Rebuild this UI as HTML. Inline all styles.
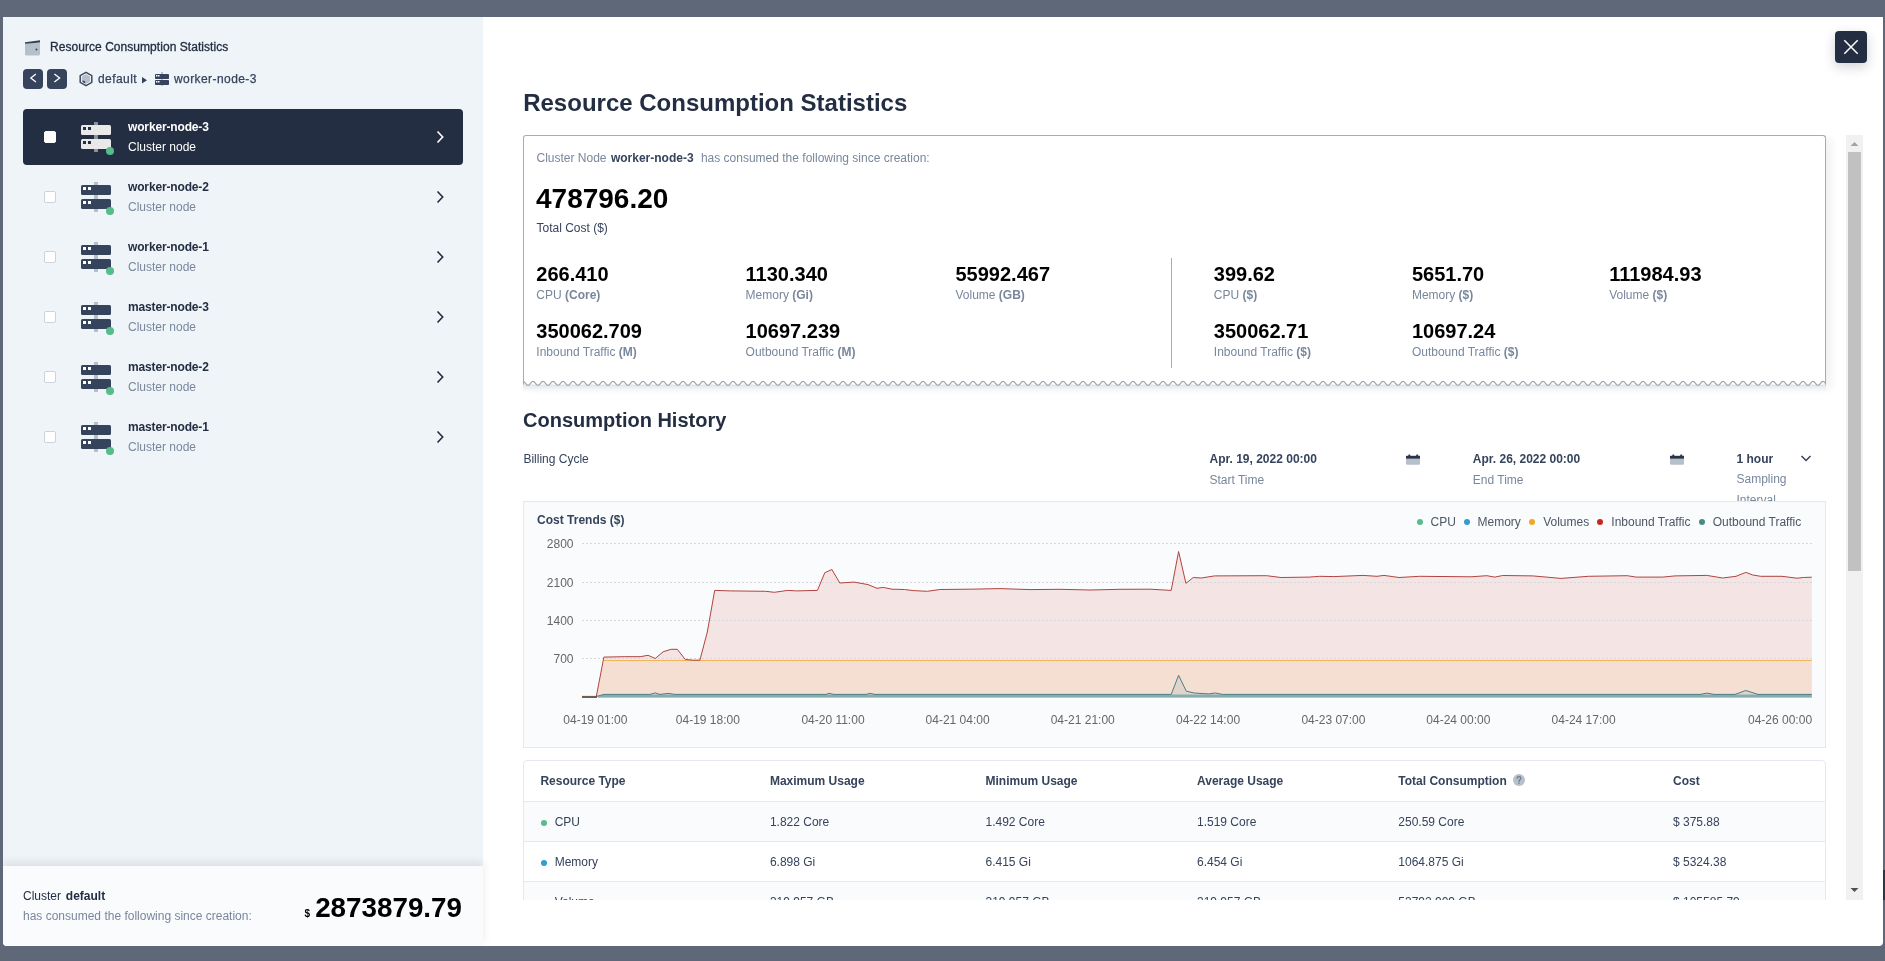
<!DOCTYPE html>
<html><head><meta charset="utf-8">
<style>
*{box-sizing:border-box;margin:0;padding:0}
html,body{width:1885px;height:961px;overflow:hidden}
body{background:#5f6878;font-family:"Liberation Sans",sans-serif;color:#242e42;position:relative}
.abs{position:absolute}
#modal{will-change:transform;position:absolute;left:3px;top:17px;width:1880px;height:929px;background:#fff;border-radius:0 0 4px 4px;overflow:hidden}
#left{position:absolute;left:0;top:0;width:480px;height:929px;background:#eff4f8}
#foot{position:absolute;left:0;top:849px;width:480px;height:80px;background:#f9fbfd;box-shadow:0 -4px 8px rgba(36,46,66,0.10)}
.t12{font-size:12px;line-height:16px;white-space:nowrap}
.b{font-weight:bold}
.gray{color:#79879c}

.item{position:absolute;left:20px;width:440px;height:56px;border-radius:4px}
.item.sel{background:#242e42;color:#fff}
.item .cb{position:absolute;left:21px;top:22px;width:12px;height:12px;background:#fff;border:1px solid #ccd3db;border-radius:2px}
.item.sel .cb{border-color:#fff}
.item .srv{position:absolute;left:58px;top:13px}
.item .nm{position:absolute;left:105px;top:10px;font-size:12px;line-height:16px;font-weight:bold;letter-spacing:-0.15px}
.item .sub{position:absolute;left:105px;top:30px;font-size:12px;line-height:16px;color:#79879c}
.item.sel .sub{color:#fff}
.item .chev{position:absolute;left:412px;top:21px}
.nav{position:absolute;width:20px;height:20px;background:#36435c;border-radius:4px}
.nav svg{display:block}
.nw{white-space:nowrap}
</style></head>
<body>
<div id="rstrip" class="abs" style="left:1883px;top:870px;width:2px;height:30px;background:#2b3548"></div>
<div id="modal">
  <!--MAIN--><div class="abs nw b" style="left:520.2px;top:71.6px;font-size:24px;line-height:28px;color:#242e42">Resource Consumption Statistics</div>
<div class="abs" style="left:1832px;top:14px;width:32px;height:32px;background:#242e42;border-radius:4px;box-shadow:0 4px 12px rgba(36,46,66,0.22)"><svg width="32" height="32" viewBox="0 0 32 32" style="display:block"><path d="M9.3 9.3 L22.7 22.7 M22.7 9.3 L9.3 22.7" stroke="#fff" stroke-width="1.5"/></svg></div>
<div class="abs" style="left:1843px;top:118px;width:17px;height:765px;background:#f1f1f1"></div>
<div class="abs" style="left:1845px;top:135px;width:13px;height:419px;background:#c1c1c1"></div>
<svg class="abs" style="left:1847px;top:124px" width="9" height="6" viewBox="0 0 9 6"><path d="M0.5 5 L4.5 1 L8.5 5Z" fill="#a3a3a3"/></svg>
<svg class="abs" style="left:1847px;top:870px" width="9" height="6" viewBox="0 0 9 6"><path d="M0.5 1 L4.5 5 L8.5 1Z" fill="#505050"/></svg>
<div class="abs" style="left:0;top:118px;width:1843px;height:765px;overflow:hidden"><div class="abs" style="left:0;top:-118px;width:1880px;height:929px"><div class="abs" style="left:520px;top:118px;width:1303px;height:250px;border:1px solid #a6acb4;border-bottom:none;border-radius:3px 3px 0 0;box-shadow:5px 3px 8px rgba(36,46,66,0.07)"></div>
<svg class="abs" style="left:520px;top:363px" width="1303" height="14" viewBox="0 0 1303 14"><defs><linearGradient id="sh" x1="0" y1="0" x2="0" y2="1"><stop offset="0" stop-color="#dde2e8"/><stop offset="1" stop-color="#ffffff" stop-opacity="0"/></linearGradient></defs><rect x="0" y="4.5" width="1303" height="10" fill="url(#sh)"/><path d="M1 0 L1 1.3  C2.2 1.3 2.8 5.3 5.0 5.3 C7.2 5.3 7.8 1.3 10.0 1.3 C12.2 1.3 12.8 5.3 15.0 5.3 C17.2 5.3 17.8 1.3 20.0 1.3 C22.2 1.3 22.8 5.3 25.0 5.3 C27.2 5.3 27.8 1.3 30.0 1.3 C32.2 1.3 32.8 5.3 35.0 5.3 C37.2 5.3 37.8 1.3 40.0 1.3 C42.2 1.3 42.8 5.3 45.0 5.3 C47.2 5.3 47.8 1.3 50.0 1.3 C52.2 1.3 52.8 5.3 55.0 5.3 C57.2 5.3 57.8 1.3 60.0 1.3 C62.2 1.3 62.8 5.3 65.0 5.3 C67.2 5.3 67.8 1.3 70.0 1.3 C72.2 1.3 72.8 5.3 75.0 5.3 C77.2 5.3 77.8 1.3 80.0 1.3 C82.2 1.3 82.8 5.3 85.0 5.3 C87.2 5.3 87.8 1.3 90.0 1.3 C92.2 1.3 92.8 5.3 95.0 5.3 C97.2 5.3 97.8 1.3 100.0 1.3 C102.2 1.3 102.8 5.3 105.0 5.3 C107.2 5.3 107.8 1.3 110.0 1.3 C112.2 1.3 112.8 5.3 115.0 5.3 C117.2 5.3 117.8 1.3 120.0 1.3 C122.2 1.3 122.8 5.3 125.0 5.3 C127.2 5.3 127.8 1.3 130.0 1.3 C132.2 1.3 132.8 5.3 135.0 5.3 C137.2 5.3 137.8 1.3 140.0 1.3 C142.2 1.3 142.8 5.3 145.0 5.3 C147.2 5.3 147.8 1.3 150.0 1.3 C152.2 1.3 152.8 5.3 155.0 5.3 C157.2 5.3 157.8 1.3 160.0 1.3 C162.2 1.3 162.8 5.3 165.0 5.3 C167.2 5.3 167.8 1.3 170.0 1.3 C172.2 1.3 172.8 5.3 175.0 5.3 C177.2 5.3 177.8 1.3 180.0 1.3 C182.2 1.3 182.8 5.3 185.0 5.3 C187.2 5.3 187.8 1.3 190.0 1.3 C192.2 1.3 192.8 5.3 195.0 5.3 C197.2 5.3 197.8 1.3 200.0 1.3 C202.2 1.3 202.8 5.3 205.0 5.3 C207.2 5.3 207.8 1.3 210.0 1.3 C212.2 1.3 212.8 5.3 215.0 5.3 C217.2 5.3 217.8 1.3 220.0 1.3 C222.2 1.3 222.8 5.3 225.0 5.3 C227.2 5.3 227.8 1.3 230.0 1.3 C232.2 1.3 232.8 5.3 235.0 5.3 C237.2 5.3 237.8 1.3 240.0 1.3 C242.2 1.3 242.8 5.3 245.0 5.3 C247.2 5.3 247.8 1.3 250.0 1.3 C252.2 1.3 252.8 5.3 255.0 5.3 C257.2 5.3 257.8 1.3 260.0 1.3 C262.2 1.3 262.8 5.3 265.0 5.3 C267.2 5.3 267.8 1.3 270.0 1.3 C272.2 1.3 272.8 5.3 275.0 5.3 C277.2 5.3 277.8 1.3 280.0 1.3 C282.2 1.3 282.8 5.3 285.0 5.3 C287.2 5.3 287.8 1.3 290.0 1.3 C292.2 1.3 292.8 5.3 295.0 5.3 C297.2 5.3 297.8 1.3 300.0 1.3 C302.2 1.3 302.8 5.3 305.0 5.3 C307.2 5.3 307.8 1.3 310.0 1.3 C312.2 1.3 312.8 5.3 315.0 5.3 C317.2 5.3 317.8 1.3 320.0 1.3 C322.2 1.3 322.8 5.3 325.0 5.3 C327.2 5.3 327.8 1.3 330.0 1.3 C332.2 1.3 332.8 5.3 335.0 5.3 C337.2 5.3 337.8 1.3 340.0 1.3 C342.2 1.3 342.8 5.3 345.0 5.3 C347.2 5.3 347.8 1.3 350.0 1.3 C352.2 1.3 352.8 5.3 355.0 5.3 C357.2 5.3 357.8 1.3 360.0 1.3 C362.2 1.3 362.8 5.3 365.0 5.3 C367.2 5.3 367.8 1.3 370.0 1.3 C372.2 1.3 372.8 5.3 375.0 5.3 C377.2 5.3 377.8 1.3 380.0 1.3 C382.2 1.3 382.8 5.3 385.0 5.3 C387.2 5.3 387.8 1.3 390.0 1.3 C392.2 1.3 392.8 5.3 395.0 5.3 C397.2 5.3 397.8 1.3 400.0 1.3 C402.2 1.3 402.8 5.3 405.0 5.3 C407.2 5.3 407.8 1.3 410.0 1.3 C412.2 1.3 412.8 5.3 415.0 5.3 C417.2 5.3 417.8 1.3 420.0 1.3 C422.2 1.3 422.8 5.3 425.0 5.3 C427.2 5.3 427.8 1.3 430.0 1.3 C432.2 1.3 432.8 5.3 435.0 5.3 C437.2 5.3 437.8 1.3 440.0 1.3 C442.2 1.3 442.8 5.3 445.0 5.3 C447.2 5.3 447.8 1.3 450.0 1.3 C452.2 1.3 452.8 5.3 455.0 5.3 C457.2 5.3 457.8 1.3 460.0 1.3 C462.2 1.3 462.8 5.3 465.0 5.3 C467.2 5.3 467.8 1.3 470.0 1.3 C472.2 1.3 472.8 5.3 475.0 5.3 C477.2 5.3 477.8 1.3 480.0 1.3 C482.2 1.3 482.8 5.3 485.0 5.3 C487.2 5.3 487.8 1.3 490.0 1.3 C492.2 1.3 492.8 5.3 495.0 5.3 C497.2 5.3 497.8 1.3 500.0 1.3 C502.2 1.3 502.8 5.3 505.0 5.3 C507.2 5.3 507.8 1.3 510.0 1.3 C512.2 1.3 512.8 5.3 515.0 5.3 C517.2 5.3 517.8 1.3 520.0 1.3 C522.2 1.3 522.8 5.3 525.0 5.3 C527.2 5.3 527.8 1.3 530.0 1.3 C532.2 1.3 532.8 5.3 535.0 5.3 C537.2 5.3 537.8 1.3 540.0 1.3 C542.2 1.3 542.8 5.3 545.0 5.3 C547.2 5.3 547.8 1.3 550.0 1.3 C552.2 1.3 552.8 5.3 555.0 5.3 C557.2 5.3 557.8 1.3 560.0 1.3 C562.2 1.3 562.8 5.3 565.0 5.3 C567.2 5.3 567.8 1.3 570.0 1.3 C572.2 1.3 572.8 5.3 575.0 5.3 C577.2 5.3 577.8 1.3 580.0 1.3 C582.2 1.3 582.8 5.3 585.0 5.3 C587.2 5.3 587.8 1.3 590.0 1.3 C592.2 1.3 592.8 5.3 595.0 5.3 C597.2 5.3 597.8 1.3 600.0 1.3 C602.2 1.3 602.8 5.3 605.0 5.3 C607.2 5.3 607.8 1.3 610.0 1.3 C612.2 1.3 612.8 5.3 615.0 5.3 C617.2 5.3 617.8 1.3 620.0 1.3 C622.2 1.3 622.8 5.3 625.0 5.3 C627.2 5.3 627.8 1.3 630.0 1.3 C632.2 1.3 632.8 5.3 635.0 5.3 C637.2 5.3 637.8 1.3 640.0 1.3 C642.2 1.3 642.8 5.3 645.0 5.3 C647.2 5.3 647.8 1.3 650.0 1.3 C652.2 1.3 652.8 5.3 655.0 5.3 C657.2 5.3 657.8 1.3 660.0 1.3 C662.2 1.3 662.8 5.3 665.0 5.3 C667.2 5.3 667.8 1.3 670.0 1.3 C672.2 1.3 672.8 5.3 675.0 5.3 C677.2 5.3 677.8 1.3 680.0 1.3 C682.2 1.3 682.8 5.3 685.0 5.3 C687.2 5.3 687.8 1.3 690.0 1.3 C692.2 1.3 692.8 5.3 695.0 5.3 C697.2 5.3 697.8 1.3 700.0 1.3 C702.2 1.3 702.8 5.3 705.0 5.3 C707.2 5.3 707.8 1.3 710.0 1.3 C712.2 1.3 712.8 5.3 715.0 5.3 C717.2 5.3 717.8 1.3 720.0 1.3 C722.2 1.3 722.8 5.3 725.0 5.3 C727.2 5.3 727.8 1.3 730.0 1.3 C732.2 1.3 732.8 5.3 735.0 5.3 C737.2 5.3 737.8 1.3 740.0 1.3 C742.2 1.3 742.8 5.3 745.0 5.3 C747.2 5.3 747.8 1.3 750.0 1.3 C752.2 1.3 752.8 5.3 755.0 5.3 C757.2 5.3 757.8 1.3 760.0 1.3 C762.2 1.3 762.8 5.3 765.0 5.3 C767.2 5.3 767.8 1.3 770.0 1.3 C772.2 1.3 772.8 5.3 775.0 5.3 C777.2 5.3 777.8 1.3 780.0 1.3 C782.2 1.3 782.8 5.3 785.0 5.3 C787.2 5.3 787.8 1.3 790.0 1.3 C792.2 1.3 792.8 5.3 795.0 5.3 C797.2 5.3 797.8 1.3 800.0 1.3 C802.2 1.3 802.8 5.3 805.0 5.3 C807.2 5.3 807.8 1.3 810.0 1.3 C812.2 1.3 812.8 5.3 815.0 5.3 C817.2 5.3 817.8 1.3 820.0 1.3 C822.2 1.3 822.8 5.3 825.0 5.3 C827.2 5.3 827.8 1.3 830.0 1.3 C832.2 1.3 832.8 5.3 835.0 5.3 C837.2 5.3 837.8 1.3 840.0 1.3 C842.2 1.3 842.8 5.3 845.0 5.3 C847.2 5.3 847.8 1.3 850.0 1.3 C852.2 1.3 852.8 5.3 855.0 5.3 C857.2 5.3 857.8 1.3 860.0 1.3 C862.2 1.3 862.8 5.3 865.0 5.3 C867.2 5.3 867.8 1.3 870.0 1.3 C872.2 1.3 872.8 5.3 875.0 5.3 C877.2 5.3 877.8 1.3 880.0 1.3 C882.2 1.3 882.8 5.3 885.0 5.3 C887.2 5.3 887.8 1.3 890.0 1.3 C892.2 1.3 892.8 5.3 895.0 5.3 C897.2 5.3 897.8 1.3 900.0 1.3 C902.2 1.3 902.8 5.3 905.0 5.3 C907.2 5.3 907.8 1.3 910.0 1.3 C912.2 1.3 912.8 5.3 915.0 5.3 C917.2 5.3 917.8 1.3 920.0 1.3 C922.2 1.3 922.8 5.3 925.0 5.3 C927.2 5.3 927.8 1.3 930.0 1.3 C932.2 1.3 932.8 5.3 935.0 5.3 C937.2 5.3 937.8 1.3 940.0 1.3 C942.2 1.3 942.8 5.3 945.0 5.3 C947.2 5.3 947.8 1.3 950.0 1.3 C952.2 1.3 952.8 5.3 955.0 5.3 C957.2 5.3 957.8 1.3 960.0 1.3 C962.2 1.3 962.8 5.3 965.0 5.3 C967.2 5.3 967.8 1.3 970.0 1.3 C972.2 1.3 972.8 5.3 975.0 5.3 C977.2 5.3 977.8 1.3 980.0 1.3 C982.2 1.3 982.8 5.3 985.0 5.3 C987.2 5.3 987.8 1.3 990.0 1.3 C992.2 1.3 992.8 5.3 995.0 5.3 C997.2 5.3 997.8 1.3 1000.0 1.3 C1002.2 1.3 1002.8 5.3 1005.0 5.3 C1007.2 5.3 1007.8 1.3 1010.0 1.3 C1012.2 1.3 1012.8 5.3 1015.0 5.3 C1017.2 5.3 1017.8 1.3 1020.0 1.3 C1022.2 1.3 1022.8 5.3 1025.0 5.3 C1027.2 5.3 1027.8 1.3 1030.0 1.3 C1032.2 1.3 1032.8 5.3 1035.0 5.3 C1037.2 5.3 1037.8 1.3 1040.0 1.3 C1042.2 1.3 1042.8 5.3 1045.0 5.3 C1047.2 5.3 1047.8 1.3 1050.0 1.3 C1052.2 1.3 1052.8 5.3 1055.0 5.3 C1057.2 5.3 1057.8 1.3 1060.0 1.3 C1062.2 1.3 1062.8 5.3 1065.0 5.3 C1067.2 5.3 1067.8 1.3 1070.0 1.3 C1072.2 1.3 1072.8 5.3 1075.0 5.3 C1077.2 5.3 1077.8 1.3 1080.0 1.3 C1082.2 1.3 1082.8 5.3 1085.0 5.3 C1087.2 5.3 1087.8 1.3 1090.0 1.3 C1092.2 1.3 1092.8 5.3 1095.0 5.3 C1097.2 5.3 1097.8 1.3 1100.0 1.3 C1102.2 1.3 1102.8 5.3 1105.0 5.3 C1107.2 5.3 1107.8 1.3 1110.0 1.3 C1112.2 1.3 1112.8 5.3 1115.0 5.3 C1117.2 5.3 1117.8 1.3 1120.0 1.3 C1122.2 1.3 1122.8 5.3 1125.0 5.3 C1127.2 5.3 1127.8 1.3 1130.0 1.3 C1132.2 1.3 1132.8 5.3 1135.0 5.3 C1137.2 5.3 1137.8 1.3 1140.0 1.3 C1142.2 1.3 1142.8 5.3 1145.0 5.3 C1147.2 5.3 1147.8 1.3 1150.0 1.3 C1152.2 1.3 1152.8 5.3 1155.0 5.3 C1157.2 5.3 1157.8 1.3 1160.0 1.3 C1162.2 1.3 1162.8 5.3 1165.0 5.3 C1167.2 5.3 1167.8 1.3 1170.0 1.3 C1172.2 1.3 1172.8 5.3 1175.0 5.3 C1177.2 5.3 1177.8 1.3 1180.0 1.3 C1182.2 1.3 1182.8 5.3 1185.0 5.3 C1187.2 5.3 1187.8 1.3 1190.0 1.3 C1192.2 1.3 1192.8 5.3 1195.0 5.3 C1197.2 5.3 1197.8 1.3 1200.0 1.3 C1202.2 1.3 1202.8 5.3 1205.0 5.3 C1207.2 5.3 1207.8 1.3 1210.0 1.3 C1212.2 1.3 1212.8 5.3 1215.0 5.3 C1217.2 5.3 1217.8 1.3 1220.0 1.3 C1222.2 1.3 1222.8 5.3 1225.0 5.3 C1227.2 5.3 1227.8 1.3 1230.0 1.3 C1232.2 1.3 1232.8 5.3 1235.0 5.3 C1237.2 5.3 1237.8 1.3 1240.0 1.3 C1242.2 1.3 1242.8 5.3 1245.0 5.3 C1247.2 5.3 1247.8 1.3 1250.0 1.3 C1252.2 1.3 1252.8 5.3 1255.0 5.3 C1257.2 5.3 1257.8 1.3 1260.0 1.3 C1262.2 1.3 1262.8 5.3 1265.0 5.3 C1267.2 5.3 1267.8 1.3 1270.0 1.3 C1272.2 1.3 1272.8 5.3 1275.0 5.3 C1277.2 5.3 1277.8 1.3 1280.0 1.3 C1282.2 1.3 1282.8 5.3 1285.0 5.3 C1287.2 5.3 1287.8 1.3 1290.0 1.3 C1292.2 1.3 1292.8 5.3 1295.0 5.3 C1297.2 5.3 1297.8 1.3 1300.0 1.3 C1302.2 1.3 1302.8 5.3 1305.0 5.3 C1307.2 5.3 1307.8 1.3 1310.0 1.3 L1302 0 Z" fill="#fff"/><path d="M0 1.3 C2.2 1.3 2.8 5.3 5.0 5.3 C7.2 5.3 7.8 1.3 10.0 1.3 C12.2 1.3 12.8 5.3 15.0 5.3 C17.2 5.3 17.8 1.3 20.0 1.3 C22.2 1.3 22.8 5.3 25.0 5.3 C27.2 5.3 27.8 1.3 30.0 1.3 C32.2 1.3 32.8 5.3 35.0 5.3 C37.2 5.3 37.8 1.3 40.0 1.3 C42.2 1.3 42.8 5.3 45.0 5.3 C47.2 5.3 47.8 1.3 50.0 1.3 C52.2 1.3 52.8 5.3 55.0 5.3 C57.2 5.3 57.8 1.3 60.0 1.3 C62.2 1.3 62.8 5.3 65.0 5.3 C67.2 5.3 67.8 1.3 70.0 1.3 C72.2 1.3 72.8 5.3 75.0 5.3 C77.2 5.3 77.8 1.3 80.0 1.3 C82.2 1.3 82.8 5.3 85.0 5.3 C87.2 5.3 87.8 1.3 90.0 1.3 C92.2 1.3 92.8 5.3 95.0 5.3 C97.2 5.3 97.8 1.3 100.0 1.3 C102.2 1.3 102.8 5.3 105.0 5.3 C107.2 5.3 107.8 1.3 110.0 1.3 C112.2 1.3 112.8 5.3 115.0 5.3 C117.2 5.3 117.8 1.3 120.0 1.3 C122.2 1.3 122.8 5.3 125.0 5.3 C127.2 5.3 127.8 1.3 130.0 1.3 C132.2 1.3 132.8 5.3 135.0 5.3 C137.2 5.3 137.8 1.3 140.0 1.3 C142.2 1.3 142.8 5.3 145.0 5.3 C147.2 5.3 147.8 1.3 150.0 1.3 C152.2 1.3 152.8 5.3 155.0 5.3 C157.2 5.3 157.8 1.3 160.0 1.3 C162.2 1.3 162.8 5.3 165.0 5.3 C167.2 5.3 167.8 1.3 170.0 1.3 C172.2 1.3 172.8 5.3 175.0 5.3 C177.2 5.3 177.8 1.3 180.0 1.3 C182.2 1.3 182.8 5.3 185.0 5.3 C187.2 5.3 187.8 1.3 190.0 1.3 C192.2 1.3 192.8 5.3 195.0 5.3 C197.2 5.3 197.8 1.3 200.0 1.3 C202.2 1.3 202.8 5.3 205.0 5.3 C207.2 5.3 207.8 1.3 210.0 1.3 C212.2 1.3 212.8 5.3 215.0 5.3 C217.2 5.3 217.8 1.3 220.0 1.3 C222.2 1.3 222.8 5.3 225.0 5.3 C227.2 5.3 227.8 1.3 230.0 1.3 C232.2 1.3 232.8 5.3 235.0 5.3 C237.2 5.3 237.8 1.3 240.0 1.3 C242.2 1.3 242.8 5.3 245.0 5.3 C247.2 5.3 247.8 1.3 250.0 1.3 C252.2 1.3 252.8 5.3 255.0 5.3 C257.2 5.3 257.8 1.3 260.0 1.3 C262.2 1.3 262.8 5.3 265.0 5.3 C267.2 5.3 267.8 1.3 270.0 1.3 C272.2 1.3 272.8 5.3 275.0 5.3 C277.2 5.3 277.8 1.3 280.0 1.3 C282.2 1.3 282.8 5.3 285.0 5.3 C287.2 5.3 287.8 1.3 290.0 1.3 C292.2 1.3 292.8 5.3 295.0 5.3 C297.2 5.3 297.8 1.3 300.0 1.3 C302.2 1.3 302.8 5.3 305.0 5.3 C307.2 5.3 307.8 1.3 310.0 1.3 C312.2 1.3 312.8 5.3 315.0 5.3 C317.2 5.3 317.8 1.3 320.0 1.3 C322.2 1.3 322.8 5.3 325.0 5.3 C327.2 5.3 327.8 1.3 330.0 1.3 C332.2 1.3 332.8 5.3 335.0 5.3 C337.2 5.3 337.8 1.3 340.0 1.3 C342.2 1.3 342.8 5.3 345.0 5.3 C347.2 5.3 347.8 1.3 350.0 1.3 C352.2 1.3 352.8 5.3 355.0 5.3 C357.2 5.3 357.8 1.3 360.0 1.3 C362.2 1.3 362.8 5.3 365.0 5.3 C367.2 5.3 367.8 1.3 370.0 1.3 C372.2 1.3 372.8 5.3 375.0 5.3 C377.2 5.3 377.8 1.3 380.0 1.3 C382.2 1.3 382.8 5.3 385.0 5.3 C387.2 5.3 387.8 1.3 390.0 1.3 C392.2 1.3 392.8 5.3 395.0 5.3 C397.2 5.3 397.8 1.3 400.0 1.3 C402.2 1.3 402.8 5.3 405.0 5.3 C407.2 5.3 407.8 1.3 410.0 1.3 C412.2 1.3 412.8 5.3 415.0 5.3 C417.2 5.3 417.8 1.3 420.0 1.3 C422.2 1.3 422.8 5.3 425.0 5.3 C427.2 5.3 427.8 1.3 430.0 1.3 C432.2 1.3 432.8 5.3 435.0 5.3 C437.2 5.3 437.8 1.3 440.0 1.3 C442.2 1.3 442.8 5.3 445.0 5.3 C447.2 5.3 447.8 1.3 450.0 1.3 C452.2 1.3 452.8 5.3 455.0 5.3 C457.2 5.3 457.8 1.3 460.0 1.3 C462.2 1.3 462.8 5.3 465.0 5.3 C467.2 5.3 467.8 1.3 470.0 1.3 C472.2 1.3 472.8 5.3 475.0 5.3 C477.2 5.3 477.8 1.3 480.0 1.3 C482.2 1.3 482.8 5.3 485.0 5.3 C487.2 5.3 487.8 1.3 490.0 1.3 C492.2 1.3 492.8 5.3 495.0 5.3 C497.2 5.3 497.8 1.3 500.0 1.3 C502.2 1.3 502.8 5.3 505.0 5.3 C507.2 5.3 507.8 1.3 510.0 1.3 C512.2 1.3 512.8 5.3 515.0 5.3 C517.2 5.3 517.8 1.3 520.0 1.3 C522.2 1.3 522.8 5.3 525.0 5.3 C527.2 5.3 527.8 1.3 530.0 1.3 C532.2 1.3 532.8 5.3 535.0 5.3 C537.2 5.3 537.8 1.3 540.0 1.3 C542.2 1.3 542.8 5.3 545.0 5.3 C547.2 5.3 547.8 1.3 550.0 1.3 C552.2 1.3 552.8 5.3 555.0 5.3 C557.2 5.3 557.8 1.3 560.0 1.3 C562.2 1.3 562.8 5.3 565.0 5.3 C567.2 5.3 567.8 1.3 570.0 1.3 C572.2 1.3 572.8 5.3 575.0 5.3 C577.2 5.3 577.8 1.3 580.0 1.3 C582.2 1.3 582.8 5.3 585.0 5.3 C587.2 5.3 587.8 1.3 590.0 1.3 C592.2 1.3 592.8 5.3 595.0 5.3 C597.2 5.3 597.8 1.3 600.0 1.3 C602.2 1.3 602.8 5.3 605.0 5.3 C607.2 5.3 607.8 1.3 610.0 1.3 C612.2 1.3 612.8 5.3 615.0 5.3 C617.2 5.3 617.8 1.3 620.0 1.3 C622.2 1.3 622.8 5.3 625.0 5.3 C627.2 5.3 627.8 1.3 630.0 1.3 C632.2 1.3 632.8 5.3 635.0 5.3 C637.2 5.3 637.8 1.3 640.0 1.3 C642.2 1.3 642.8 5.3 645.0 5.3 C647.2 5.3 647.8 1.3 650.0 1.3 C652.2 1.3 652.8 5.3 655.0 5.3 C657.2 5.3 657.8 1.3 660.0 1.3 C662.2 1.3 662.8 5.3 665.0 5.3 C667.2 5.3 667.8 1.3 670.0 1.3 C672.2 1.3 672.8 5.3 675.0 5.3 C677.2 5.3 677.8 1.3 680.0 1.3 C682.2 1.3 682.8 5.3 685.0 5.3 C687.2 5.3 687.8 1.3 690.0 1.3 C692.2 1.3 692.8 5.3 695.0 5.3 C697.2 5.3 697.8 1.3 700.0 1.3 C702.2 1.3 702.8 5.3 705.0 5.3 C707.2 5.3 707.8 1.3 710.0 1.3 C712.2 1.3 712.8 5.3 715.0 5.3 C717.2 5.3 717.8 1.3 720.0 1.3 C722.2 1.3 722.8 5.3 725.0 5.3 C727.2 5.3 727.8 1.3 730.0 1.3 C732.2 1.3 732.8 5.3 735.0 5.3 C737.2 5.3 737.8 1.3 740.0 1.3 C742.2 1.3 742.8 5.3 745.0 5.3 C747.2 5.3 747.8 1.3 750.0 1.3 C752.2 1.3 752.8 5.3 755.0 5.3 C757.2 5.3 757.8 1.3 760.0 1.3 C762.2 1.3 762.8 5.3 765.0 5.3 C767.2 5.3 767.8 1.3 770.0 1.3 C772.2 1.3 772.8 5.3 775.0 5.3 C777.2 5.3 777.8 1.3 780.0 1.3 C782.2 1.3 782.8 5.3 785.0 5.3 C787.2 5.3 787.8 1.3 790.0 1.3 C792.2 1.3 792.8 5.3 795.0 5.3 C797.2 5.3 797.8 1.3 800.0 1.3 C802.2 1.3 802.8 5.3 805.0 5.3 C807.2 5.3 807.8 1.3 810.0 1.3 C812.2 1.3 812.8 5.3 815.0 5.3 C817.2 5.3 817.8 1.3 820.0 1.3 C822.2 1.3 822.8 5.3 825.0 5.3 C827.2 5.3 827.8 1.3 830.0 1.3 C832.2 1.3 832.8 5.3 835.0 5.3 C837.2 5.3 837.8 1.3 840.0 1.3 C842.2 1.3 842.8 5.3 845.0 5.3 C847.2 5.3 847.8 1.3 850.0 1.3 C852.2 1.3 852.8 5.3 855.0 5.3 C857.2 5.3 857.8 1.3 860.0 1.3 C862.2 1.3 862.8 5.3 865.0 5.3 C867.2 5.3 867.8 1.3 870.0 1.3 C872.2 1.3 872.8 5.3 875.0 5.3 C877.2 5.3 877.8 1.3 880.0 1.3 C882.2 1.3 882.8 5.3 885.0 5.3 C887.2 5.3 887.8 1.3 890.0 1.3 C892.2 1.3 892.8 5.3 895.0 5.3 C897.2 5.3 897.8 1.3 900.0 1.3 C902.2 1.3 902.8 5.3 905.0 5.3 C907.2 5.3 907.8 1.3 910.0 1.3 C912.2 1.3 912.8 5.3 915.0 5.3 C917.2 5.3 917.8 1.3 920.0 1.3 C922.2 1.3 922.8 5.3 925.0 5.3 C927.2 5.3 927.8 1.3 930.0 1.3 C932.2 1.3 932.8 5.3 935.0 5.3 C937.2 5.3 937.8 1.3 940.0 1.3 C942.2 1.3 942.8 5.3 945.0 5.3 C947.2 5.3 947.8 1.3 950.0 1.3 C952.2 1.3 952.8 5.3 955.0 5.3 C957.2 5.3 957.8 1.3 960.0 1.3 C962.2 1.3 962.8 5.3 965.0 5.3 C967.2 5.3 967.8 1.3 970.0 1.3 C972.2 1.3 972.8 5.3 975.0 5.3 C977.2 5.3 977.8 1.3 980.0 1.3 C982.2 1.3 982.8 5.3 985.0 5.3 C987.2 5.3 987.8 1.3 990.0 1.3 C992.2 1.3 992.8 5.3 995.0 5.3 C997.2 5.3 997.8 1.3 1000.0 1.3 C1002.2 1.3 1002.8 5.3 1005.0 5.3 C1007.2 5.3 1007.8 1.3 1010.0 1.3 C1012.2 1.3 1012.8 5.3 1015.0 5.3 C1017.2 5.3 1017.8 1.3 1020.0 1.3 C1022.2 1.3 1022.8 5.3 1025.0 5.3 C1027.2 5.3 1027.8 1.3 1030.0 1.3 C1032.2 1.3 1032.8 5.3 1035.0 5.3 C1037.2 5.3 1037.8 1.3 1040.0 1.3 C1042.2 1.3 1042.8 5.3 1045.0 5.3 C1047.2 5.3 1047.8 1.3 1050.0 1.3 C1052.2 1.3 1052.8 5.3 1055.0 5.3 C1057.2 5.3 1057.8 1.3 1060.0 1.3 C1062.2 1.3 1062.8 5.3 1065.0 5.3 C1067.2 5.3 1067.8 1.3 1070.0 1.3 C1072.2 1.3 1072.8 5.3 1075.0 5.3 C1077.2 5.3 1077.8 1.3 1080.0 1.3 C1082.2 1.3 1082.8 5.3 1085.0 5.3 C1087.2 5.3 1087.8 1.3 1090.0 1.3 C1092.2 1.3 1092.8 5.3 1095.0 5.3 C1097.2 5.3 1097.8 1.3 1100.0 1.3 C1102.2 1.3 1102.8 5.3 1105.0 5.3 C1107.2 5.3 1107.8 1.3 1110.0 1.3 C1112.2 1.3 1112.8 5.3 1115.0 5.3 C1117.2 5.3 1117.8 1.3 1120.0 1.3 C1122.2 1.3 1122.8 5.3 1125.0 5.3 C1127.2 5.3 1127.8 1.3 1130.0 1.3 C1132.2 1.3 1132.8 5.3 1135.0 5.3 C1137.2 5.3 1137.8 1.3 1140.0 1.3 C1142.2 1.3 1142.8 5.3 1145.0 5.3 C1147.2 5.3 1147.8 1.3 1150.0 1.3 C1152.2 1.3 1152.8 5.3 1155.0 5.3 C1157.2 5.3 1157.8 1.3 1160.0 1.3 C1162.2 1.3 1162.8 5.3 1165.0 5.3 C1167.2 5.3 1167.8 1.3 1170.0 1.3 C1172.2 1.3 1172.8 5.3 1175.0 5.3 C1177.2 5.3 1177.8 1.3 1180.0 1.3 C1182.2 1.3 1182.8 5.3 1185.0 5.3 C1187.2 5.3 1187.8 1.3 1190.0 1.3 C1192.2 1.3 1192.8 5.3 1195.0 5.3 C1197.2 5.3 1197.8 1.3 1200.0 1.3 C1202.2 1.3 1202.8 5.3 1205.0 5.3 C1207.2 5.3 1207.8 1.3 1210.0 1.3 C1212.2 1.3 1212.8 5.3 1215.0 5.3 C1217.2 5.3 1217.8 1.3 1220.0 1.3 C1222.2 1.3 1222.8 5.3 1225.0 5.3 C1227.2 5.3 1227.8 1.3 1230.0 1.3 C1232.2 1.3 1232.8 5.3 1235.0 5.3 C1237.2 5.3 1237.8 1.3 1240.0 1.3 C1242.2 1.3 1242.8 5.3 1245.0 5.3 C1247.2 5.3 1247.8 1.3 1250.0 1.3 C1252.2 1.3 1252.8 5.3 1255.0 5.3 C1257.2 5.3 1257.8 1.3 1260.0 1.3 C1262.2 1.3 1262.8 5.3 1265.0 5.3 C1267.2 5.3 1267.8 1.3 1270.0 1.3 C1272.2 1.3 1272.8 5.3 1275.0 5.3 C1277.2 5.3 1277.8 1.3 1280.0 1.3 C1282.2 1.3 1282.8 5.3 1285.0 5.3 C1287.2 5.3 1287.8 1.3 1290.0 1.3 C1292.2 1.3 1292.8 5.3 1295.0 5.3 C1297.2 5.3 1297.8 1.3 1300.0 1.3 C1302.2 1.3 1302.8 5.3 1305.0 5.3 C1307.2 5.3 1307.8 1.3 1310.0 1.3" fill="none" stroke="#a3a9b2" stroke-width="1.2"/><path d="M0.5 0 L0.5 1.5 M1302.5 0 L1302.5 3" stroke="#a6acb4" stroke-width="1"/></svg>
<div class="abs nw " style="left:533.5px;top:132.8px;font-size:12px;line-height:16px;"><span class="gray">Cluster Node</span> <span class="b" style="color:#36435c;margin-left:1px">worker-node-3</span> <span class="gray" style="margin-left:4px">has consumed the following since creation:</span></div>
<div class="abs nw b" style="left:533.0px;top:165.7px;font-size:28px;line-height:32px;color:#000">478796.20</div>
<div class="abs nw " style="left:533.5px;top:202.6px;font-size:12px;line-height:16px;color:#36435c">Total Cost ($)</div>
<div class="abs nw b" style="left:533.3px;top:244.9px;font-size:20px;line-height:24px;color:#000">266.410</div><div class="abs nw gray" style="left:533.3px;top:270.0px;font-size:12px;line-height:16px;">CPU <span class="b">(Core)</span></div>
<div class="abs nw b" style="left:742.6px;top:244.9px;font-size:20px;line-height:24px;color:#000">1130.340</div><div class="abs nw gray" style="left:742.6px;top:270.0px;font-size:12px;line-height:16px;">Memory <span class="b">(Gi)</span></div>
<div class="abs nw b" style="left:952.5px;top:244.9px;font-size:20px;line-height:24px;color:#000">55992.467</div><div class="abs nw gray" style="left:952.5px;top:270.0px;font-size:12px;line-height:16px;">Volume <span class="b">(GB)</span></div>
<div class="abs nw b" style="left:533.3px;top:302.2px;font-size:20px;line-height:24px;color:#000">350062.709</div><div class="abs nw gray" style="left:533.3px;top:327.0px;font-size:12px;line-height:16px;">Inbound Traffic <span class="b">(M)</span></div>
<div class="abs nw b" style="left:742.6px;top:302.2px;font-size:20px;line-height:24px;color:#000">10697.239</div><div class="abs nw gray" style="left:742.6px;top:327.0px;font-size:12px;line-height:16px;">Outbound Traffic <span class="b">(M)</span></div>
<div class="abs" style="left:1168px;top:241px;width:1px;height:110px;background:#a4adb9"></div>
<div class="abs nw b" style="left:1210.8px;top:244.9px;font-size:20px;line-height:24px;color:#000">399.62</div><div class="abs nw gray" style="left:1210.8px;top:270.0px;font-size:12px;line-height:16px;">CPU <span class="b">($)</span></div>
<div class="abs nw b" style="left:1408.9px;top:244.9px;font-size:20px;line-height:24px;color:#000">5651.70</div><div class="abs nw gray" style="left:1408.9px;top:270.0px;font-size:12px;line-height:16px;">Memory <span class="b">($)</span></div>
<div class="abs nw b" style="left:1606.2px;top:244.9px;font-size:20px;line-height:24px;color:#000">111984.93</div><div class="abs nw gray" style="left:1606.2px;top:270.0px;font-size:12px;line-height:16px;">Volume <span class="b">($)</span></div>
<div class="abs nw b" style="left:1210.8px;top:302.2px;font-size:20px;line-height:24px;color:#000">350062.71</div><div class="abs nw gray" style="left:1210.8px;top:327.0px;font-size:12px;line-height:16px;">Inbound Traffic <span class="b">($)</span></div>
<div class="abs nw b" style="left:1408.9px;top:302.2px;font-size:20px;line-height:24px;color:#000">10697.24</div><div class="abs nw gray" style="left:1408.9px;top:327.0px;font-size:12px;line-height:16px;">Outbound Traffic <span class="b">($)</span></div>
<div class="abs nw b" style="left:520.0px;top:391.2px;font-size:20px;line-height:24px;color:#242e42">Consumption History</div>
<div class="abs nw " style="left:520.4px;top:433.9px;font-size:12px;line-height:16px;color:#36435c">Billing Cycle</div>
<div class="abs nw b" style="left:1206.5px;top:434.0px;font-size:12px;line-height:16px;color:#36435c">Apr. 19, 2022 00:00</div>
<div class="abs nw gray" style="left:1206.5px;top:455.1px;font-size:12px;line-height:16px;">Start Time</div>
<svg class="abs" style="left:1403px;top:437px" width="14" height="11" viewBox="0 0 14 11"><path d="M0 4.5 L14 4.5 L14 9.6 Q14 10.8 12.8 10.8 L1.2 10.8 Q0 10.8 0 9.6 Z" fill="#b6c0cb"/><rect x="0" y="1.8" width="14" height="2.9" fill="#2a3549"/><rect x="2.3" y="0.4" width="2" height="2" rx="0.6" fill="#2a3549"/><rect x="10.2" y="0.4" width="2" height="2" rx="0.6" fill="#2a3549"/></svg>
<div class="abs nw b" style="left:1469.8px;top:434.0px;font-size:12px;line-height:16px;color:#36435c">Apr. 26, 2022 00:00</div>
<div class="abs nw gray" style="left:1469.8px;top:455.1px;font-size:12px;line-height:16px;">End Time</div>
<svg class="abs" style="left:1666.5px;top:437px" width="14" height="11" viewBox="0 0 14 11"><path d="M0 4.5 L14 4.5 L14 9.6 Q14 10.8 12.8 10.8 L1.2 10.8 Q0 10.8 0 9.6 Z" fill="#b6c0cb"/><rect x="0" y="1.8" width="14" height="2.9" fill="#2a3549"/><rect x="2.3" y="0.4" width="2" height="2" rx="0.6" fill="#2a3549"/><rect x="10.2" y="0.4" width="2" height="2" rx="0.6" fill="#2a3549"/></svg>
<div class="abs nw b" style="left:1733.5px;top:434.0px;font-size:12px;line-height:16px;color:#36435c">1 hour</div>
<svg class="abs" style="left:1797px;top:437px" width="12" height="9" viewBox="0 0 12 9"><path d="M1.5 2 L6 6.5 L10.5 2" fill="none" stroke="#36435c" stroke-width="1.5"/></svg>
<div class="abs nw gray" style="left:1733.5px;top:454.3px;font-size:12px;line-height:16px;">Sampling</div>
<div class="abs nw gray" style="left:1733.5px;top:474.6px;font-size:12px;line-height:16px;">Interval</div>
<div class="abs" style="left:520px;top:484px;width:1303px;height:247px;background:#f9fbfd;border:1px solid #e3e9ef"></div>
<div class="abs nw b" style="left:534.1px;top:495.0px;font-size:12px;line-height:16px;color:#36435c">Cost Trends ($)</div>
<div class="abs" style="left:1414px;top:502px;width:6px;height:6px;border-radius:50%;background:#55bc8a"></div>
<div class="abs nw " style="left:1427.5px;top:496.7px;font-size:12px;line-height:16px;color:#4d5766">CPU</div>
<div class="abs" style="left:1460.5px;top:502px;width:6px;height:6px;border-radius:50%;background:#329dce"></div>
<div class="abs nw " style="left:1474.5px;top:496.7px;font-size:12px;line-height:16px;color:#4d5766">Memory</div>
<div class="abs" style="left:1526px;top:502px;width:6px;height:6px;border-radius:50%;background:#f5a623"></div>
<div class="abs nw " style="left:1540.2px;top:496.7px;font-size:12px;line-height:16px;color:#4d5766">Volumes</div>
<div class="abs" style="left:1593.5px;top:502px;width:6px;height:6px;border-radius:50%;background:#ca2621"></div>
<div class="abs nw " style="left:1608.3px;top:496.7px;font-size:12px;line-height:16px;color:#4d5766">Inbound Traffic</div>
<div class="abs" style="left:1696px;top:502px;width:6px;height:6px;border-radius:50%;background:#4a8a89"></div>
<div class="abs nw " style="left:1709.7px;top:496.7px;font-size:12px;line-height:16px;color:#4d5766">Outbound Traffic</div>
<div class="abs nw" style="left:0;width:570.5px;text-align:right;top:518.9px;font-size:12px;line-height:16px;color:#666">2800</div>
<div class="abs nw" style="left:0;width:570.5px;text-align:right;top:557.8px;font-size:12px;line-height:16px;color:#666">2100</div>
<div class="abs nw" style="left:0;width:570.5px;text-align:right;top:595.8px;font-size:12px;line-height:16px;color:#666">1400</div>
<div class="abs nw" style="left:0;width:570.5px;text-align:right;top:633.9px;font-size:12px;line-height:16px;color:#666">700</div>
<svg class="abs" style="left:0;top:0" width="1880" height="929">
<path d="M579.1 679.5 L593.3 679.5 L600.9 640.1 L621.2 639.7 L637.1 639.7 L645.1 638.3 L652.2 641.5 L660.1 634.8 L668.1 632.3 L674.3 632.3 L682.2 642.4 L690.2 643.2 L696.9 643.2 L704.3 615.0 L711.7 573.4 L727.3 573.9 L762.7 574.3 L771.4 575.3 L784.7 573.4 L793.5 573.9 L814.4 573.4 L821.8 555.7 L828.9 552.5 L836.8 566.0 L851.0 565.1 L865.1 567.6 L874.0 571.3 L880.2 570.4 L889.0 572.2 L901.4 572.5 L910.2 573.6 L924.4 574.3 L936.8 572.5 L967.0 572.2 L997.0 571.6 L1027.0 572.6 L1057.0 572.3 L1087.0 573.0 L1117.0 572.3 L1147.0 572.2 L1168.2 573.4 L1175.6 534.5 L1182.9 566.3 L1190.3 560.5 L1198.3 561.0 L1211.5 558.9 L1263.7 558.7 L1277.9 560.5 L1306.2 560.1 L1316.8 559.3 L1330.9 559.6 L1360.0 558.4 L1374.0 559.3 L1381.0 558.4 L1396.0 560.5 L1416.6 559.3 L1467.9 559.8 L1483.8 558.7 L1491.7 560.1 L1499.7 558.5 L1529.7 558.9 L1558.0 561.4 L1585.4 559.3 L1624.3 558.7 L1633.1 560.1 L1659.6 560.1 L1672.0 558.9 L1703.8 558.4 L1719.7 561.0 L1733.0 559.3 L1742.8 555.4 L1749.8 558.0 L1757.8 559.3 L1779.0 559.3 L1794.0 561.2 L1800.3 560.5 L1808.8 560.2 L1808.8 643.5 L600.9 643.5 L593.3 679.5 L579.1 679.5 Z" fill="#f4e4e4"/>
<path d="M579.1 679.5 L593.3 679.5 L600.9 643.5 L1808.8 643.5 L1808.8 677.9 L600.9 677.9 L593.3 679.5 L579.1 679.5 Z" fill="#f5dfd2"/>
<path d="M579.1 679.5 L593.3 679.5 L600.9 677.4 L647.0 677.4 L652.2 675.9 L657.0 677.4 L665.0 676.4 L672.0 677.4 L823.0 677.4 L826.0 676.4 L831.0 677.4 L863.0 677.4 L867.0 676.4 L872.0 677.4 L1168.2 677.4 L1175.6 658.3 L1183.3 674.2 L1191.2 676.0 L1205.4 676.9 L1212.4 676.0 L1219.5 677.4 L1697.0 677.4 L1704.0 676.1 L1711.0 677.4 L1732.0 677.4 L1742.8 673.5 L1755.0 677.4 L1808.8 677.4 L1808.8 677.9 L579.1 677.9 Z" fill="rgba(74,126,134,0.11)"/>
<path d="M593.3 680 L600.9 677.5 L1808.8 677.5 L1808.8 680.5 Z" fill="#86adb0"/>
<line x1="579" y1="526.5" x2="1809" y2="526.5" stroke="#d5d8dc" stroke-width="1" stroke-dasharray="2 2"/>
<line x1="579" y1="565.5" x2="1809" y2="565.5" stroke="#d5d8dc" stroke-width="1" stroke-dasharray="2 2"/>
<line x1="579" y1="603.5" x2="1809" y2="603.5" stroke="#d5d8dc" stroke-width="1" stroke-dasharray="2 2"/>
<line x1="579" y1="641.5" x2="1809" y2="641.5" stroke="#d5d8dc" stroke-width="1" stroke-dasharray="2 2"/>
<path d="M595 680.5 L1808.8 680.5" fill="none" stroke="#a3d4b8" stroke-width="1"/>
<path d="M579.1 679.5 L593.3 679.5 L600.9 677.4 L647.0 677.4 L652.2 675.9 L657.0 677.4 L665.0 676.4 L672.0 677.4 L823.0 677.4 L826.0 676.4 L831.0 677.4 L863.0 677.4 L867.0 676.4 L872.0 677.4 L1168.2 677.4 L1175.6 658.3 L1183.3 674.2 L1191.2 676.0 L1205.4 676.9 L1212.4 676.0 L1219.5 677.4 L1697.0 677.4 L1704.0 676.1 L1711.0 677.4 L1732.0 677.4 L1742.8 673.5 L1755.0 677.4 L1808.8 677.4" fill="none" stroke="#4a7e86" stroke-width="1"/>
<path d="M600.9 643.5 L1808.8 643.5" fill="none" stroke="#f2b35a" stroke-width="1"/>
<path d="M579.1 679.5 L593.3 679.5 L600.9 640.1 L621.2 639.7 L637.1 639.7 L645.1 638.3 L652.2 641.5 L660.1 634.8 L668.1 632.3 L674.3 632.3 L682.2 642.4 L690.2 643.2 L696.9 643.2 L704.3 615.0 L711.7 573.4 L727.3 573.9 L762.7 574.3 L771.4 575.3 L784.7 573.4 L793.5 573.9 L814.4 573.4 L821.8 555.7 L828.9 552.5 L836.8 566.0 L851.0 565.1 L865.1 567.6 L874.0 571.3 L880.2 570.4 L889.0 572.2 L901.4 572.5 L910.2 573.6 L924.4 574.3 L936.8 572.5 L967.0 572.2 L997.0 571.6 L1027.0 572.6 L1057.0 572.3 L1087.0 573.0 L1117.0 572.3 L1147.0 572.2 L1168.2 573.4 L1175.6 534.5 L1182.9 566.3 L1190.3 560.5 L1198.3 561.0 L1211.5 558.9 L1263.7 558.7 L1277.9 560.5 L1306.2 560.1 L1316.8 559.3 L1330.9 559.6 L1360.0 558.4 L1374.0 559.3 L1381.0 558.4 L1396.0 560.5 L1416.6 559.3 L1467.9 559.8 L1483.8 558.7 L1491.7 560.1 L1499.7 558.5 L1529.7 558.9 L1558.0 561.4 L1585.4 559.3 L1624.3 558.7 L1633.1 560.1 L1659.6 560.1 L1672.0 558.9 L1703.8 558.4 L1719.7 561.0 L1733.0 559.3 L1742.8 555.4 L1749.8 558.0 L1757.8 559.3 L1779.0 559.3 L1794.0 561.2 L1800.3 560.5 L1808.8 560.2" fill="none" stroke="#b0433f" stroke-width="1"/>
<path d="M579 680 L594 680" stroke="#6b5f55" stroke-width="2"/>
</svg>
<div class="abs nw " style="left:560.3px;top:695.0px;font-size:12px;line-height:16px;color:#666">04-19 01:00</div>
<div class="abs nw " style="left:672.8px;top:695.0px;font-size:12px;line-height:16px;color:#666">04-19 18:00</div>
<div class="abs nw " style="left:798.4px;top:695.0px;font-size:12px;line-height:16px;color:#666">04-20 11:00</div>
<div class="abs nw " style="left:922.6px;top:695.0px;font-size:12px;line-height:16px;color:#666">04-21 04:00</div>
<div class="abs nw " style="left:1047.7px;top:695.0px;font-size:12px;line-height:16px;color:#666">04-21 21:00</div>
<div class="abs nw " style="left:1173.0px;top:695.0px;font-size:12px;line-height:16px;color:#666">04-22 14:00</div>
<div class="abs nw " style="left:1298.4px;top:695.0px;font-size:12px;line-height:16px;color:#666">04-23 07:00</div>
<div class="abs nw " style="left:1423.3px;top:695.0px;font-size:12px;line-height:16px;color:#666">04-24 00:00</div>
<div class="abs nw " style="left:1548.6px;top:695.0px;font-size:12px;line-height:16px;color:#666">04-24 17:00</div>
<div class="abs nw " style="left:1745.0px;top:695.0px;font-size:12px;line-height:16px;color:#666">04-26 00:00</div>
<div class="abs" style="left:520px;top:743px;width:1303px;height:300px;border:1px solid #e3e9ef;border-radius:4px;background:#fff;overflow:hidden"><div class="abs" style="left:0;top:40px;width:1301px;height:40px;background:#f9fbfd;border-top:1px solid #e3e9ef"></div><div class="abs" style="left:0;top:80px;width:1301px;height:40px;background:#fff;border-top:1px solid #e3e9ef"></div><div class="abs" style="left:0;top:120px;width:1301px;height:40px;background:#f9fbfd;border-top:1px solid #e3e9ef"></div></div>
<div class="abs nw b" style="left:537.4px;top:755.6px;font-size:12px;line-height:16px;color:#36435c">Resource Type</div>
<div class="abs nw b" style="left:766.9px;top:755.6px;font-size:12px;line-height:16px;color:#36435c">Maximum Usage</div>
<div class="abs nw b" style="left:982.5px;top:755.6px;font-size:12px;line-height:16px;color:#36435c">Minimum Usage</div>
<div class="abs nw b" style="left:1194.0px;top:755.6px;font-size:12px;line-height:16px;color:#36435c">Average Usage</div>
<div class="abs nw b" style="left:1395.3px;top:755.6px;font-size:12px;line-height:16px;color:#36435c">Total Consumption</div>
<div class="abs nw b" style="left:1670.0px;top:755.6px;font-size:12px;line-height:16px;color:#36435c">Cost</div>
<svg class="abs" style="left:1510px;top:757px" width="12" height="12" viewBox="0 0 12 12"><circle cx="6" cy="6" r="6" fill="#b6c0cb"/><path d="M4.1 4.3 Q4.3 2.6 6 2.6 Q7.8 2.6 7.8 4.3 Q7.8 5.3 6.6 5.9 Q6 6.3 6 7.6" fill="none" stroke="#6c788a" stroke-width="1.2" stroke-linecap="round"/><rect x="5.3" y="8.7" width="1.4" height="1.1" fill="#6c788a"/></svg>
<div class="abs" style="left:538px;top:802.8px;width:6px;height:6px;border-radius:50%;background:#55bc8a"></div>
<div class="abs nw " style="left:551.7px;top:796.6px;font-size:12px;line-height:16px;color:#36435c">CPU</div>
<div class="abs nw " style="left:766.9px;top:796.6px;font-size:12px;line-height:16px;color:#36435c">1.822 Core</div>
<div class="abs nw " style="left:982.5px;top:796.6px;font-size:12px;line-height:16px;color:#36435c">1.492 Core</div>
<div class="abs nw " style="left:1194.0px;top:796.6px;font-size:12px;line-height:16px;color:#36435c">1.519 Core</div>
<div class="abs nw " style="left:1395.3px;top:796.6px;font-size:12px;line-height:16px;color:#36435c">250.59 Core</div>
<div class="abs nw " style="left:1670.0px;top:796.6px;font-size:12px;line-height:16px;color:#36435c">$ 375.88</div>
<div class="abs" style="left:538px;top:843.0px;width:6px;height:6px;border-radius:50%;background:#329dce"></div>
<div class="abs nw " style="left:551.7px;top:836.8px;font-size:12px;line-height:16px;color:#36435c">Memory</div>
<div class="abs nw " style="left:766.9px;top:836.8px;font-size:12px;line-height:16px;color:#36435c">6.898 Gi</div>
<div class="abs nw " style="left:982.5px;top:836.8px;font-size:12px;line-height:16px;color:#36435c">6.415 Gi</div>
<div class="abs nw " style="left:1194.0px;top:836.8px;font-size:12px;line-height:16px;color:#36435c">6.454 Gi</div>
<div class="abs nw " style="left:1395.3px;top:836.8px;font-size:12px;line-height:16px;color:#36435c">1064.875 Gi</div>
<div class="abs nw " style="left:1670.0px;top:836.8px;font-size:12px;line-height:16px;color:#36435c">$ 5324.38</div>
<div class="abs" style="left:538px;top:883.2px;width:6px;height:6px;border-radius:50%;background:#f5a623"></div>
<div class="abs nw " style="left:551.7px;top:877.0px;font-size:12px;line-height:16px;color:#36435c">Volume</div>
<div class="abs nw " style="left:766.9px;top:877.0px;font-size:12px;line-height:16px;color:#36435c">319.957 GB</div>
<div class="abs nw " style="left:982.5px;top:877.0px;font-size:12px;line-height:16px;color:#36435c">319.957 GB</div>
<div class="abs nw " style="left:1194.0px;top:877.0px;font-size:12px;line-height:16px;color:#36435c">319.957 GB</div>
<div class="abs nw " style="left:1395.3px;top:877.0px;font-size:12px;line-height:16px;color:#36435c">53792.909 GB</div>
<div class="abs nw " style="left:1670.0px;top:877.0px;font-size:12px;line-height:16px;color:#36435c">$ 105585.79</div></div></div><!--/MAIN-->
  <div id="left">
    <svg class="abs" style="left:22px;top:23px" width="16" height="16" viewBox="0 0 16 16"><rect x="0" y="2.5" width="15" height="13" rx="1.5" fill="#b6c0cb"/><path d="M0 2.2 L15 0.2 L15 2.6 L0 3.8 Z" fill="#36435c"/><circle cx="11.5" cy="9.5" r="1" fill="#36435c"/></svg>
    <div class="abs t12" style="left:47px;top:22px;letter-spacing:0.05px;-webkit-text-stroke:0.3px #242e42">Resource Consumption Statistics</div>
    <div class="nav" style="left:20px;top:52px"><svg width="20" height="20" viewBox="0 0 20 20"><path d="M12.9 5 L7.8 9 L12.9 13" fill="none" stroke="#fff" stroke-width="1.3"/></svg></div>
    <div class="nav" style="left:44px;top:52px"><svg width="20" height="20" viewBox="0 0 20 20"><path d="M7.4 5 L12.6 9 L7.4 13" fill="none" stroke="#fff" stroke-width="1.3"/></svg></div>
    <svg class="abs" style="left:75px;top:54px" width="16" height="16" viewBox="0 0 16 16"><polygon points="8.00,1.30 13.80,4.65 13.80,11.35 8.00,14.70 2.20,11.35 2.20,4.65" fill="#fff" stroke="#3d4a5e" stroke-width="1.5" stroke-linejoin="round"/><polygon points="8.00,3.10 12.24,5.55 12.24,10.45 8.00,12.90 3.76,10.45 3.76,5.55" fill="#b6c0cb"/><path d="M4.6 9.2 L7.2 10.6 L7.2 12.6 L4.6 11.1Z" fill="#36435c"/></svg>
    <div class="abs t12" style="left:95px;top:54px;color:#36435c;letter-spacing:0.42px;-webkit-text-stroke:0.25px #36435c">default</div>
    <svg class="abs" style="left:139.3px;top:59.5px" width="6" height="8" viewBox="0 0 6 8"><path d="M0 0 L5 3.3 L0 6.6Z" fill="#36435c"/></svg>
    <svg class="abs" style="left:152px;top:55px" width="14" height="14" viewBox="0 0 14 14"><rect x="6" y="0" width="2" height="14" fill="#b6c0cb"/><rect x="0" y="2" width="14" height="5" rx="0.8" fill="#36435c"/><rect x="0" y="8" width="14" height="5" rx="0.8" fill="#36435c"/><rect x="1" y="3" width="1.5" height="1.5" fill="#fff"/><rect x="3" y="3" width="1.5" height="1.5" fill="#fff"/><rect x="1" y="9" width="1.5" height="1.5" fill="#fff"/><rect x="3" y="9" width="1.5" height="1.5" fill="#fff"/></svg>
    <div class="abs t12" style="left:171px;top:54px;color:#36435c;letter-spacing:0.42px;-webkit-text-stroke:0.25px #36435c">worker-node-3</div>
<div class="item sel" style="top:92px">
<div class="cb"></div>
<svg class="srv" width="34" height="34" viewBox="0 0 34 34"><rect x="13" y="0" width="4" height="30" fill="#8b9199"/><rect x="0" y="3" width="30" height="10" rx="1.5" fill="#e9e9e9"/><rect x="0" y="17" width="30" height="10" rx="1.5" fill="#e9e9e9"/><rect x="2" y="5" width="3" height="3" fill="#242e42"/><rect x="7" y="5" width="3" height="3" fill="#242e42"/><rect x="2" y="19" width="3" height="3" fill="#242e42"/><rect x="7" y="19" width="3" height="3" fill="#242e42"/><circle cx="29" cy="29" r="4" fill="#55bc8a"/></svg>
<div class="nm">worker-node-3</div><div class="sub">Cluster node</div>
<svg class="chev" width="10" height="14" viewBox="0 0 10 14"><path d="M2.5 1.5 L7.7 7 L2.5 12.5" fill="none" stroke="#fff" stroke-width="1.6"/></svg>
</div>
<div class="item" style="top:152px">
<div class="cb"></div>
<svg class="srv" width="34" height="34" viewBox="0 0 34 34"><rect x="13" y="0" width="4" height="30" fill="#b6c0cb"/><rect x="0" y="3" width="30" height="10" rx="1.5" fill="#36435c"/><rect x="0" y="17" width="30" height="10" rx="1.5" fill="#36435c"/><rect x="2" y="5" width="3" height="3" fill="#fff"/><rect x="7" y="5" width="3" height="3" fill="#fff"/><rect x="2" y="19" width="3" height="3" fill="#fff"/><rect x="7" y="19" width="3" height="3" fill="#fff"/><circle cx="29" cy="29" r="4" fill="#55bc8a"/></svg>
<div class="nm">worker-node-2</div><div class="sub">Cluster node</div>
<svg class="chev" width="10" height="14" viewBox="0 0 10 14"><path d="M2.5 1.5 L7.7 7 L2.5 12.5" fill="none" stroke="#242e42" stroke-width="1.6"/></svg>
</div>
<div class="item" style="top:212px">
<div class="cb"></div>
<svg class="srv" width="34" height="34" viewBox="0 0 34 34"><rect x="13" y="0" width="4" height="30" fill="#b6c0cb"/><rect x="0" y="3" width="30" height="10" rx="1.5" fill="#36435c"/><rect x="0" y="17" width="30" height="10" rx="1.5" fill="#36435c"/><rect x="2" y="5" width="3" height="3" fill="#fff"/><rect x="7" y="5" width="3" height="3" fill="#fff"/><rect x="2" y="19" width="3" height="3" fill="#fff"/><rect x="7" y="19" width="3" height="3" fill="#fff"/><circle cx="29" cy="29" r="4" fill="#55bc8a"/></svg>
<div class="nm">worker-node-1</div><div class="sub">Cluster node</div>
<svg class="chev" width="10" height="14" viewBox="0 0 10 14"><path d="M2.5 1.5 L7.7 7 L2.5 12.5" fill="none" stroke="#242e42" stroke-width="1.6"/></svg>
</div>
<div class="item" style="top:272px">
<div class="cb"></div>
<svg class="srv" width="34" height="34" viewBox="0 0 34 34"><rect x="13" y="0" width="4" height="30" fill="#b6c0cb"/><rect x="0" y="3" width="30" height="10" rx="1.5" fill="#36435c"/><rect x="0" y="17" width="30" height="10" rx="1.5" fill="#36435c"/><rect x="2" y="5" width="3" height="3" fill="#fff"/><rect x="7" y="5" width="3" height="3" fill="#fff"/><rect x="2" y="19" width="3" height="3" fill="#fff"/><rect x="7" y="19" width="3" height="3" fill="#fff"/><circle cx="29" cy="29" r="4" fill="#55bc8a"/></svg>
<div class="nm">master-node-3</div><div class="sub">Cluster node</div>
<svg class="chev" width="10" height="14" viewBox="0 0 10 14"><path d="M2.5 1.5 L7.7 7 L2.5 12.5" fill="none" stroke="#242e42" stroke-width="1.6"/></svg>
</div>
<div class="item" style="top:332px">
<div class="cb"></div>
<svg class="srv" width="34" height="34" viewBox="0 0 34 34"><rect x="13" y="0" width="4" height="30" fill="#b6c0cb"/><rect x="0" y="3" width="30" height="10" rx="1.5" fill="#36435c"/><rect x="0" y="17" width="30" height="10" rx="1.5" fill="#36435c"/><rect x="2" y="5" width="3" height="3" fill="#fff"/><rect x="7" y="5" width="3" height="3" fill="#fff"/><rect x="2" y="19" width="3" height="3" fill="#fff"/><rect x="7" y="19" width="3" height="3" fill="#fff"/><circle cx="29" cy="29" r="4" fill="#55bc8a"/></svg>
<div class="nm">master-node-2</div><div class="sub">Cluster node</div>
<svg class="chev" width="10" height="14" viewBox="0 0 10 14"><path d="M2.5 1.5 L7.7 7 L2.5 12.5" fill="none" stroke="#242e42" stroke-width="1.6"/></svg>
</div>
<div class="item" style="top:392px">
<div class="cb"></div>
<svg class="srv" width="34" height="34" viewBox="0 0 34 34"><rect x="13" y="0" width="4" height="30" fill="#b6c0cb"/><rect x="0" y="3" width="30" height="10" rx="1.5" fill="#36435c"/><rect x="0" y="17" width="30" height="10" rx="1.5" fill="#36435c"/><rect x="2" y="5" width="3" height="3" fill="#fff"/><rect x="7" y="5" width="3" height="3" fill="#fff"/><rect x="2" y="19" width="3" height="3" fill="#fff"/><rect x="7" y="19" width="3" height="3" fill="#fff"/><circle cx="29" cy="29" r="4" fill="#55bc8a"/></svg>
<div class="nm">master-node-1</div><div class="sub">Cluster node</div>
<svg class="chev" width="10" height="14" viewBox="0 0 10 14"><path d="M2.5 1.5 L7.7 7 L2.5 12.5" fill="none" stroke="#242e42" stroke-width="1.6"/></svg>
</div>
  </div>
  <div id="foot">
    <div class="abs t12" style="left:20px;top:22px">Cluster <span class="b" style="margin-left:1.5px">default</span></div>
    <div class="abs t12 gray" style="left:20px;top:42px">has consumed the following since creation:</div>
    <div class="abs b" style="right:21px;top:26px;white-space:nowrap;color:#000"><span style="font-size:10px;vertical-align:0px;margin-right:5.2px">$</span><span style="font-size:27.8px;line-height:32px">2873879.79</span></div>
  </div>
</div>
</body></html>
